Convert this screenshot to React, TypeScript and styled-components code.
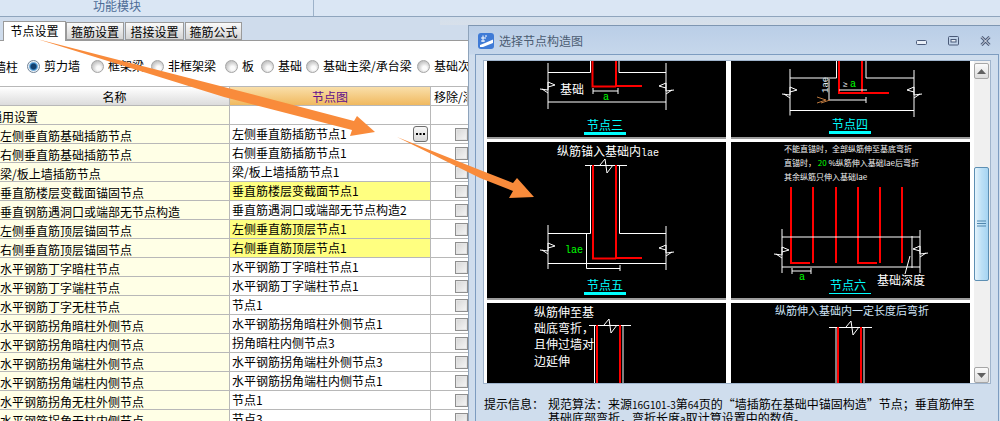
import React from "react";
import styled, { createGlobalStyle } from "styled-components";

const CJK = `"Noto Sans CJK SC", "Liberation Sans", sans-serif`;

const Global = createGlobalStyle`
  html, body { margin: 0; padding: 0; background: #fff; }
  body { font-family: ${CJK}; font-size: 12px; color: #000; }
`;

const Page = styled.div`
  position: relative;
  width: 1000px;
  height: 421px;
  overflow: hidden;
  background: #fff;
`;

const TopBar = styled.div`
  display: flex;
  height: 16px;
  background: #dae6f4;
  border-bottom: 1px solid #8fa5bd;
  overflow: hidden;
`;
const ModuleCell = styled.div`
  width: 314px;
  box-sizing: border-box;
  padding-left: 93px;
  border-right: 1px solid #9db2c9;
  font-size: 12px;
  line-height: 12px;
  color: #4d6c96;
`;

const TabStrip = styled.div`
  display: flex;
  align-items: flex-end;
  height: 24px;
  box-sizing: border-box;
  padding-left: 3px;
  background: #cfdcec;
  border-bottom: 1px solid #9a9a9a;
`;
const Tab = styled.div<{ $active?: boolean; $w: number }>`
  position: relative;
  box-sizing: border-box;
  width: ${(p) => p.$w}px;
  height: ${(p) => (p.$active ? 20 : 18)}px;
  margin-bottom: ${(p) => (p.$active ? -1 : 0)}px;
  margin-right: ${(p) => (p.$active ? 0 : 1)}px;
  border: 1px solid #9a9a9a;
  border-bottom: ${(p) => (p.$active ? "none" : "1px solid #9a9a9a")};
  background: ${(p) => (p.$active ? "#fff" : "linear-gradient(#fafafa, #d4d4d4)")};
  text-align: center;
  font-size: 12px;
  line-height: 17px;
  color: #000;
`;

const RadioRow = styled.div`
  display: grid;
  grid-template-columns: 33px 64px 60px 74px 36px 45px 111px 1fr;
  align-items: center;
  width: 480px;
  height: 45px;
  box-sizing: border-box;
  margin-left: -6px;
  padding-top: 5px;
  white-space: nowrap;
  overflow: hidden;
`;
const RadioItem = styled.div`
  display: flex;
  align-items: center;
  gap: 4px;
  line-height: 14px;
`;
const RadioDot = styled.span<{ $on?: boolean }>`
  display: inline-block;
  box-sizing: border-box;
  width: 13px;
  height: 13px;
  flex: none;
  border-radius: 50%;
  border: 1px solid ${(p) => (p.$on ? "#6f8296" : "#a5a5a5")};
  background: ${(p) =>
    p.$on
      ? "radial-gradient(circle at 50% 50%, #12406f 0 2.5px, #3f8fd0 3.5px, #eef3f7 5px)"
      : "radial-gradient(circle at 60% 65%, #fbfbfb 0 2px, #d8d8d8 5px, #c4c4c4 7px)"};
`;

const Table = styled.div`
  width: 468px;
  overflow: hidden;
  border-top: 1px solid #b8b8b8;
`;
const Row = styled.div`
  display: grid;
  grid-template-columns: 230px 201px 1fr;
  height: 19px;
  box-sizing: border-box;
  border-bottom: 1px solid #b8b8b8;
`;
const HeadCell = styled.div<{ $node?: boolean; $left?: boolean }>`
  box-sizing: border-box;
  border-right: 1px solid #b8b8b8;
  background: ${(p) =>
    p.$node ? "linear-gradient(#f9dfaa, #f0b95f)" : p.$left ? "#fff" : "linear-gradient(#fff, #dcdcdc)"};
  color: ${(p) => (p.$node ? "#5f0f8c" : "#000")};
  text-align: ${(p) => (p.$left ? "left" : "center")};
  padding-left: ${(p) => (p.$left ? 3 : 0)}px;
  white-space: nowrap;
  overflow: hidden;
  line-height: 20px;
`;
const NameCell = styled.div<{ $indent?: number }>`
  box-sizing: border-box;
  background: #ffffe6;
  border-right: 1px solid #b8b8b8;
  text-indent: ${(p) => p.$indent ?? 0}px;
  white-space: nowrap;
  overflow: hidden;
  line-height: 22px;
`;
const NodeCell = styled.div<{ $hl?: boolean }>`
  display: flex;
  align-items: center;
  justify-content: space-between;
  box-sizing: border-box;
  padding: 0 2px 1px 2px;
  background: ${(p) => (p.$hl ? "#ffff80" : "#fff")};
  border-right: 1px solid #b8b8b8;
  white-space: nowrap;
  overflow: hidden;
  line-height: 18px;
`;
const MoreButton = styled.span`
  display: flex;
  align-items: center;
  justify-content: center;
  box-sizing: border-box;
  width: 15px;
  height: 16px;
  margin-top: 1px;
  border: 1px solid #6e6e6e;
  border-radius: 3px;
  background: linear-gradient(#f8f8f8, #d8d8d8);
`;
const CheckCell = styled.div`
  display: flex;
  align-items: center;
  padding-left: 24px;
`;
const CheckBox = styled.span`
  display: block;
  flex: none;
  box-sizing: border-box;
  width: 13px;
  height: 13px;
  border: 1px solid #8f8f8f;
  background: linear-gradient(135deg, #d6d6d6, #f6f6f6);
  box-shadow: inset 0 0 0 1px #e4e4e4;
`;

const Dialog = styled.div`
  position: absolute;
  left: 468px;
  top: 17px;
  width: 532px;
  height: 404px;
  box-sizing: border-box;
`;
const DialogTopGap = styled.div`
  height: 8px;
  background: linear-gradient(#d3dfec, #d8e0ea);
  margin-left: -28px;
`;
const DialogFrame = styled.div`
  height: 396px;
  box-sizing: border-box;
  border-top: 1px solid #7e96b2;
  border-left: 1px solid #8ea3bb;
  background: linear-gradient(#bacee7 0, #c6d7eb 28px, #cfdded 29px);
`;
const TitleBar = styled.div`
  display: flex;
  align-items: center;
  height: 28px;
  box-sizing: border-box;
  padding: 2px 9px 0 9px;
`;
const TitleText = styled.div`
  margin-left: 5px;
  flex: 1;
  color: #4b5c72;
  font-size: 12px;
  line-height: 16px;
`;
const WinButtons = styled.div`
  display: flex;
  align-items: center;
  gap: 21px;
`;
const Body = styled.div`
  margin-left: 6px;
  height: 368px;
  box-sizing: border-box;
  border: 1px solid #7d9cc0;
  border-bottom: none;
  padding: 5px 7px 0 7px;
  width: 524px;
  background: #cfdded;
`;
const ListBox = styled.div`
  display: flex;
  height: 324px;
  box-sizing: border-box;
  border: 1px solid #9fb4cc;
  background: #fff;
`;
const Panels = styled.div`
  flex: 1;
  display: grid;
  grid-template-columns: 239px 239px;
  grid-template-rows: 78px 158px 1fr;
  column-gap: 5px;
  row-gap: 3px;
  padding-left: 3px;
  overflow: hidden;
`;
const Panel = styled.div<{ $end?: boolean }>`
  background: #000;
  border-bottom: ${(p) => (p.$end ? "none" : "2px solid #9c9c9c")};
  box-sizing: border-box;
  overflow: hidden;
  svg { display: block; }
`;
const ScrollTrack = styled.div`
  position: relative;
  width: 16px;
  margin-left: 3px;
  background: #f0f0f0;
`;
const ScrollButton = styled.div<{ $down?: boolean }>`
  position: absolute;
  left: 0;
  width: 15px;
  height: 16px;
  box-sizing: border-box;
  ${(p) => (p.$down ? "bottom: 0;" : "top: 2px;")}
  border: 1px solid #a6a6a6;
  border-radius: 2px;
  background: linear-gradient(#fbfbfb, #dcdcdc);
  display: flex;
  align-items: center;
  justify-content: center;
`;
const ScrollThumb = styled.div`
  position: absolute;
  left: 0;
  top: 106px;
  width: 15px;
  height: 114px;
  box-sizing: border-box;
  border: 1px solid #5d8fb3;
  border-radius: 2px;
  background: linear-gradient(90deg, #e6f4fc, #bde0f6 50%, #a6d4f2);
  display: flex;
  align-items: center;
  justify-content: center;
`;
const Hint = styled.div`
  display: flex;
  padding: 14px 0 0 1px;
  font-size: 12px;
  line-height: 12.5px;
  color: #000;
`;
const HintLabel = styled.div`
  width: 64px;
  flex: none;
`;
const HintText = styled.div`
  width: 436px;
`;
const SmallLatin = styled.span`
  font-size: 10px;
`;

const svgText = { fontFamily: CJK };

function Break({ x, y, flip }: { x: number; y: number; flip?: boolean }) {
  const s = flip ? -1 : 1;
  return (
    <path
      d={`M${x - 8 * s} ${y + 1} L${x} ${y + 2} L${x} ${y - 6} L${x + 7 * s} ${y - 3} L${x} ${y - 1} M${x - 6 * s} ${y + 1} L${x} ${y + 5}`}
      stroke="#fff"
      fill="none"
      strokeWidth={1}
    />
  );
}

function TopBreak({ x, y }: { x: number; y: number }) {
  return <path d={`M${x - 6} ${y} L${x - 1} ${y - 6} L${x + 1} ${y + 8} L${x + 7} ${y}`} stroke="#fff" fill="none" />;
}

function NodeLabel({ x, y, text, thin }: { x: number; y: number; text: string; thin?: boolean }) {
  return (
    <>
      <text x={x} y={y} fontSize={12} fill="#00ffff" style={svgText}>
        {text}
      </text>
      {thin ? (
        <rect x={x - 1} y={y + 3} width={42} height={1} fill="#00ffff" />
      ) : (
        <rect x={x - 3} y={y + 2} width={42} height={3} fill="#00ffff" />
      )}
    </>
  );
}

function PanelThree() {
  return (
    <svg width={239} height={76} viewBox="487 61 239 76">
      <path d="M548 63V109M548 72.5H590.5V61M619 61V72.5H666M666 63V110M548 102H666" stroke="#fff" fill="none" />
      <Break x={548} y={88} />
      <Break x={666} y={89} flip />
      <path d="M592.5 61V86.5H616M616 61V86H642" stroke="#ff0000" strokeWidth={2} fill="none" />
      <path d="M593 91H618M593 88V94M618 88V94" stroke="#fff" fill="none" />
      <text x={560} y={94} fontSize={12} fill="#fff" style={svgText}>基础</text>
      <text x={603} y={100} fontSize={10} fill="#00ff00" fontFamily="Liberation Mono, monospace">a</text>
      <NodeLabel x={587} y={130} text="节点三" />
    </svg>
  );
}

function PanelFour() {
  return (
    <svg width={239} height={76} viewBox="731 61 239 76">
      <path d="M790 69V115.5M790 78H836.5V61M866 61V78H914M914 70V117M790 110.5H914" stroke="#fff" fill="none" />
      <Break x={790} y={93} />
      <Break x={914} y={93} flip />
      <path d="M839 61V93H889M862 61V93" stroke="#ff0000" strokeWidth={2} fill="none" />
      <path d="M839 90H867M829 79V100H866M866 97V103" stroke="#fff" fill="none" />
      <text x={843} y={87} fontSize={8} fill="#fff" fontFamily="Liberation Mono, monospace">≥</text>
      <text x={850} y={87} fontSize={10} fill="#00ff00" fontFamily="Liberation Mono, monospace">a</text>
      <text x={0} y={0} fontSize={9} fill="#dfe8f2" fontFamily="Liberation Mono, monospace" transform="translate(828 93) rotate(-90)">1ae</text>
      <path d="M820 104L829 101L820 98M824 104L833 101" stroke="#b9763c" fill="none" transform="translate(-3 -1)" />
      <NodeLabel x={832} y={129} text="节点四" />
    </svg>
  );
}

function PanelFive() {
  return (
    <svg width={239} height={156} viewBox="487 141 239 156">
      <text x={557} y={155} fontSize={12} fill="#fff" style={svgText}>纵筋锚入基础内</text>
      <text x={641} y={155} fontSize={10} fill="#fff" fontFamily="Liberation Mono, monospace">lae</text>
      <path d="M585 164.5H627M590.5 164.5V232.5H548M619.5 164.5V232.5H666M548 224V268M666 225V269M548 262.5H666M586.5 232V267.5H620M620 264V270" stroke="#fff" fill="none" />
      <TopBreak x={606} y={164} />
      <Break x={548} y={248} />
      <Break x={666} y={250} flip />
      <path d="M593 164V257.5H616M616 164V257H642" stroke="#ff0000" strokeWidth={2} fill="none" />
      <text x={565} y={252} fontSize={10} fill="#00ff00" fontFamily="Liberation Mono, monospace">lae</text>
      <NodeLabel x={587} y={289} text="节点五" />
    </svg>
  );
}

function PanelSix() {
  return (
    <svg width={239} height={156} viewBox="731 141 239 156">
      <text x={784} y={151} fontSize={8} fill="#f4f4f4" style={svgText}>不能直锚时，全部纵筋伸至基底弯折</text>
      <text x={784} y={165} fontSize={8} fill="#f4f4f4" style={svgText}>
        直锚时，<tspan fill="#00ff00"> 20 </tspan>%纵筋伸入基础lae后弯折
      </text>
      <text x={784} y={179} fontSize={8} fill="#f4f4f4" style={svgText}>其余纵筋只伸入基础lae</text>
      <path d="M791 186V262H810M813 186V262M836 186V262M858 186V262H877M880 186V262M902 186V262" stroke="#ff0000" strokeWidth={2} fill="none" />
      <path d="M782 228V272M920 229V272M782 236H920M782 266H920M912 235V267M910 255L905 273M792 270H811M792 267V273M811 267V273" stroke="#fff" fill="none" />
      <Break x={782} y={252} />
      <Break x={920} y={251} flip />
      <text x={799} y={279} fontSize={10} fill="#00ff00" fontFamily="Liberation Mono, monospace">a</text>
      <text x={877} y={284} fontSize={12} fill="#fff" style={svgText}>基础深度</text>
      <NodeLabel x={830} y={289} text="节点六" thin />
    </svg>
  );
}

function PanelSeven() {
  const lines = ["纵筋伸至基", "础底弯折，", "且伸过墙对", "边延伸"];
  return (
    <svg width={239} height={82} viewBox="487 302 239 82">
      {lines.map((t, i) => (
        <text key={t} x={534} y={315.5 + i * 16.4} fontSize={12} fill="#fff" style={svgText}>{t}</text>
      ))}
      <path d="M589 324.5H631M594.5 324.5V384M623 324.5V384" stroke="#fff" fill="none" />
      <TopBreak x={610} y={324} />
      <path d="M597 324V384M620 324V384" stroke="#ff0000" strokeWidth={2} fill="none" />
    </svg>
  );
}

function PanelEight() {
  return (
    <svg width={239} height={82} viewBox="731 302 239 82">
      <text x={775} y={314} fontSize={11} fill="#cfe4f7" style={svgText}>纵筋伸入基础内一定长度后弯折</text>
      <path d="M829 326.5H872M836 326.5V384M864 326.5V384" stroke="#fff" fill="none" />
      <TopBreak x={852} y={326} />
      <path d="M838 326V384M861 326V384" stroke="#ff0000" strokeWidth={2} fill="none" />
    </svg>
  );
}

const ArrowLayer = styled.svg`
  position: absolute;
  left: 0;
  top: 0;
  pointer-events: none;
`;

const radios: { label: string; on?: boolean }[] = [
  { label: "剪力墙", on: true },
  { label: "框架梁" },
  { label: "非框架梁" },
  { label: "板" },
  { label: "基础" },
  { label: "基础主梁/承台梁" },
  { label: "基础次梁" },
];

type RowData = { name: string; node: string; hl?: boolean; more?: boolean };
const rows: RowData[] = [
  { name: "左侧垂直筋基础插筋节点", node: "左侧垂直筋插筋节点1", more: true },
  { name: "右侧垂直筋基础插筋节点", node: "右侧垂直筋插筋节点1" },
  { name: "梁/板上墙插筋节点", node: "梁/板上墙插筋节点1" },
  { name: "垂直筋楼层变截面锚固节点", node: "垂直筋楼层变截面节点1", hl: true },
  { name: "垂直钢筋遇洞口或端部无节点构造", node: "垂直筋遇洞口或端部无节点构造2" },
  { name: "左侧垂直筋顶层锚固节点", node: "左侧垂直筋顶层节点1", hl: true },
  { name: "右侧垂直筋顶层锚固节点", node: "右侧垂直筋顶层节点1", hl: true },
  { name: "水平钢筋丁字暗柱节点", node: "水平钢筋丁字暗柱节点1" },
  { name: "水平钢筋丁字端柱节点", node: "水平钢筋丁字端柱节点1" },
  { name: "水平钢筋丁字无柱节点", node: "节点1" },
  { name: "水平钢筋拐角暗柱外侧节点", node: "水平钢筋拐角暗柱外侧节点1" },
  { name: "水平钢筋拐角暗柱内侧节点", node: "拐角暗柱内侧节点3" },
  { name: "水平钢筋拐角端柱外侧节点", node: "水平钢筋拐角端柱外侧节点3" },
  { name: "水平钢筋拐角端柱内侧节点", node: "水平钢筋拐角端柱内侧节点1" },
  { name: "水平钢筋拐角无柱外侧节点", node: "节点1" },
  { name: "水平钢筋拐角无柱内侧节点", node: "节点3" },
];

export default function App() {
  return (
    <Page>
      <Global />
      <TopBar>
        <ModuleCell>功能模块</ModuleCell>
      </TopBar>
      <TabStrip>
        <Tab $active $w={63}>节点设置</Tab>
        <Tab $w={58}>箍筋设置</Tab>
        <Tab $w={59}>搭接设置</Tab>
        <Tab $w={57}>箍筋公式</Tab>
      </TabStrip>
      <RadioRow>
        <span>墙柱</span>
        {radios.map((r) => (
          <RadioItem key={r.label}>
            <RadioDot $on={r.on} />
            <span>{r.label}</span>
          </RadioItem>
        ))}
      </RadioRow>
      <Table>
        <Row>
          <HeadCell>名称</HeadCell>
          <HeadCell $node>节点图</HeadCell>
          <HeadCell $left>移除/添加</HeadCell>
        </Row>
        <Row>
          <NameCell $indent={-10}>通用设置</NameCell>
          <NodeCell />
          <CheckCell />
        </Row>
        {rows.map((r) => (
          <Row key={r.name}>
            <NameCell>{r.name}</NameCell>
            <NodeCell $hl={r.hl}>
              <span>{r.node}</span>
              {r.more && (
                <MoreButton>
                  <svg width={9} height={3} viewBox="0 0 9 3">
                    <rect x={0} y={0} width={2} height={2} fill="#000" />
                    <rect x={3.5} y={0} width={2} height={2} fill="#000" />
                    <rect x={7} y={0} width={2} height={2} fill="#000" />
                  </svg>
                </MoreButton>
              )}
            </NodeCell>
            <CheckCell>
              <CheckBox />
            </CheckCell>
          </Row>
        ))}
      </Table>

      <Dialog>
        <DialogTopGap />
        <DialogFrame>
          <TitleBar>
            <svg width={16} height={16} viewBox="0 0 16 16">
              <rect x={0} y={0} width={16} height={16} rx={3} fill="#3f7bd6" />
              <path d="M2 12L7 10L15 6.5V10L5 14H2Z" fill="#fff" />
              <path d="M5 2.5V9M3 5H8M3 8H7M7 3L9 3" stroke="#fff" fill="none" />
            </svg>
            <TitleText>选择节点构造图</TitleText>
            <WinButtons>
              <svg width={11} height={10} viewBox="0 0 11 10">
                <rect x={0.5} y={4.5} width={10} height={4} rx={1} fill="#e8eef6" stroke="#4a5a78" />
              </svg>
              <svg width={11} height={10} viewBox="0 0 11 10">
                <rect x={0.5} y={0.5} width={10} height={8.5} rx={1} fill="none" stroke="#4a5a78" />
                <rect x={3} y={3.5} width={5} height={2.5} fill="#e8eef6" stroke="#4a5a78" strokeWidth={1} />
              </svg>
              <svg width={11} height={10} viewBox="0 0 11 10">
                <path d="M1.5 1L9.5 9M9.5 1L1.5 9" stroke="#4a5a78" strokeWidth={3} />
                <path d="M1.5 1L9.5 9M9.5 1L1.5 9" stroke="#eef2f8" strokeWidth={1} />
              </svg>
            </WinButtons>
          </TitleBar>
          <Body>
            <ListBox>
              <Panels>
                <Panel><PanelThree /></Panel>
                <Panel><PanelFour /></Panel>
                <Panel><PanelFive /></Panel>
                <Panel><PanelSix /></Panel>
                <Panel $end><PanelSeven /></Panel>
                <Panel $end><PanelEight /></Panel>
              </Panels>
              <ScrollTrack>
                <ScrollButton>
                  <svg width={9} height={5} viewBox="0 0 9 5"><path d="M4.5 0L9 5H0Z" fill="#606060" /></svg>
                </ScrollButton>
                <ScrollThumb>
                  <svg width={9} height={8} viewBox="0 0 9 8">
                    <path d="M0 1H9M0 3.5H9M0 6H9" stroke="#4f86ad" />
                  </svg>
                </ScrollThumb>
                <ScrollButton $down>
                  <svg width={9} height={5} viewBox="0 0 9 5"><path d="M0 0H9L4.5 5Z" fill="#606060" /></svg>
                </ScrollButton>
              </ScrollTrack>
            </ListBox>
            <Hint>
              <HintLabel>提示信息：</HintLabel>
              <HintText>
                规范算法：来源<SmallLatin>16G101-3</SmallLatin>第<SmallLatin>64</SmallLatin>页的“墙插筋在基础中锚固构造”节点；垂直筋伸至基础底部弯折，弯折长度<SmallLatin>a</SmallLatin>取计算设置中的数值。
              </HintText>
            </Hint>
          </Body>
        </DialogFrame>
      </Dialog>

      <ArrowLayer width={1000} height={421} viewBox="0 0 1000 421">
        <polygon points="37,39 224,87 354,121 357,116 375,132 350,136 352,130 224,97" fill="#f98b3b" />
        <polygon points="397,137 480,170 513,183 517,178 534,197 509,198 513,191 480,178" fill="#f98b3b" />
      </ArrowLayer>
    </Page>
  );
}
